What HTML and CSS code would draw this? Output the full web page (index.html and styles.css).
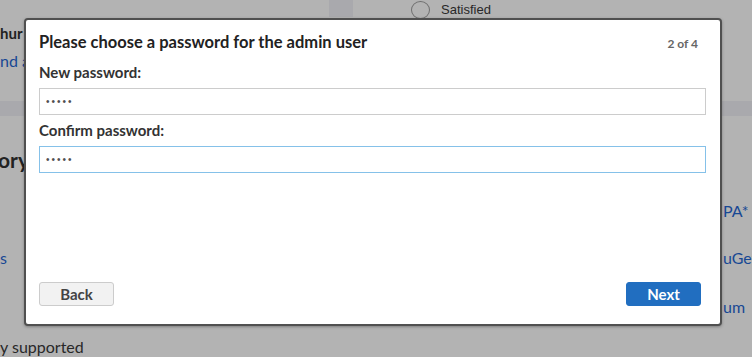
FILE: index.html
```html
<!DOCTYPE html>
<html>
  <head>
    <title>Admin setup</title>
    <link rel="stylesheet" href="styles.css">
  </head>
  <body>
  <div id="page">
    <div class="toprow">
      <div class="tab"></div>
      <div class="radio"><span class="circle"></span>Satisfied</div>
    </div>
    <div class="day">hur</div>
    <div class="link first">nd a</div>
    <div class="band"></div>
    <div class="cols">
      <div class="leftcol">
        <div class="heading">ory</div>
        <div class="link apps">s</div>
        <div class="plain">y supported</div>
      </div>
      <div class="rightcol">
        <div class="link pa">PA*</div>
        <div class="link nuget">uGet</div>
        <div class="link forum">um</div>
      </div>
    </div>
  </div>

  <div id="dialog">
    <div class="dialogHead">
      <span class="title">Please choose a password for the admin user</span>
      <span class="step">2 of 4</span>
    </div>
    <form class="fields">
      <label for="pw1">New password:</label>
      <input id="pw1" type="password" value="admin" class="field">
      <label for="pw2">Confirm password:</label>
      <input id="pw2" type="password" value="admin" class="field focused">
    </form>
    <div class="buttons">
      <button class="btn back">Back</button>
      <button class="btn next">Next</button>
    </div>
  </div>
  </body>
</html>
```

FILE: styles.css
```css
html, body {
  margin: 0;
  height: 100%;
  overflow: hidden;
  }
body {
  background: rgb(179,179,179);
  font: 14px "Lato", "Liberation Sans", sans-serif;
  color: rgb(34,34,34);
  }
#page {
  width: 752px;
  height: 357px;
  }
.toprow {
  display: flex;
  height: 18px;
  }
.tab {
  width: 24px;
  height: 17px;
  margin-left: 329px;
  background: rgb(169,169,173);
  }
.radio {
  display: flex;
  align-items: center;
  margin-left: 58px;
  font: 13px "Liberation Sans", sans-serif;
  color: rgb(40,40,40);
  line-height: 18px;
  padding-top: 2px;
  }
.circle {
  width: 19px;
  height: 18px;
  border: 1px solid rgb(110,110,110);
  border-radius: 50%;
  margin-right: 11px;
  box-sizing: border-box;
  }
.day {
  font-weight: bold;
  font-size: 15px;
  margin-top: 5px;
  line-height: 20px;
  }
.link {
  color: rgb(24,72,148);
  font-size: 16px;
  line-height: 22px;
  }
.link.first {
  margin-top: 7px;
  }
.band {
  height: 15px;
  margin-top: 29px;
  background: rgb(169,169,173);
  }
.cols {
  display: flex;
  justify-content: space-between;
  }
.leftcol {
  flex: 1;
  }
.rightcol {
  width: 29px;
  white-space: nowrap;
  }
.heading {
  font-size: 21px;
  font-weight: bold;
  margin-top: 29px;
  margin-left: -2px;
  line-height: 30px;
  }
.link.apps {
  margin-top: 72px;
  }
.plain {
  font-size: 16px;
  line-height: 22px;
  margin-top: 67px;
  color: rgb(40,40,40);
  }
.link.pa {
  margin-top: 84px;
  }
.link.nuget {
  margin-top: 25px;
  }
.link.forum {
  margin-top: 27px;
  }
#dialog {
  position: absolute;
  top: 18px;
  left: 24px;
  width: 698px;
  height: 308px;
  box-sizing: border-box;
  background: white;
  border: 2px solid rgb(80,80,80);
  border-radius: 4px;
  box-shadow: 0 1px 3px rgba(0,0,0,0.3);
  padding: 12px 14px 18px 13px;
  display: flex;
  flex-direction: column;
  }
.dialogHead {
  display: flex;
  justify-content: space-between;
  align-items: baseline;
  padding-right: 8px;
  line-height: 20px;
  }
.title {
  font-weight: bold;
  font-size: 16.5px;
  }
.step {
  font-weight: bold;
  font-size: 12px;
  color: rgb(102,102,102);
  }
.fields {
  display: flex;
  flex-direction: column;
  margin: 0;
  padding-top: 3px;
  flex: 1;
  }
label {
  font-weight: bold;
  font-size: 15px;
  line-height: 20px;
  color: rgb(51,51,51);
  margin-top: 5px;
  margin-bottom: 6px;
  }
.field {
  height: 27px;
  box-sizing: border-box;
  border: 1px solid rgb(204,204,204);
  padding: 0 6px;
  font-size: 10px;
  letter-spacing: 2px;
  color: rgb(80,80,80);
  outline: none;
  }
input.field.focused {
  border: 1px solid rgb(133,193,233);
  }
.buttons {
  display: flex;
  justify-content: space-between;
  padding-right: 5px;
  }
.btn {
  width: 75px;
  height: 24px;
  border-radius: 3px;
  font: bold 15px "Lato", sans-serif;
  padding: 0;
  }
.back {
  background: rgb(242,242,242);
  border: 1px solid rgb(204,204,204);
  color: rgb(68,68,68);
  }
.next {
  background: rgb(33,110,192);
  border: 1px solid rgb(33,110,192);
  color: white;
  }
```
